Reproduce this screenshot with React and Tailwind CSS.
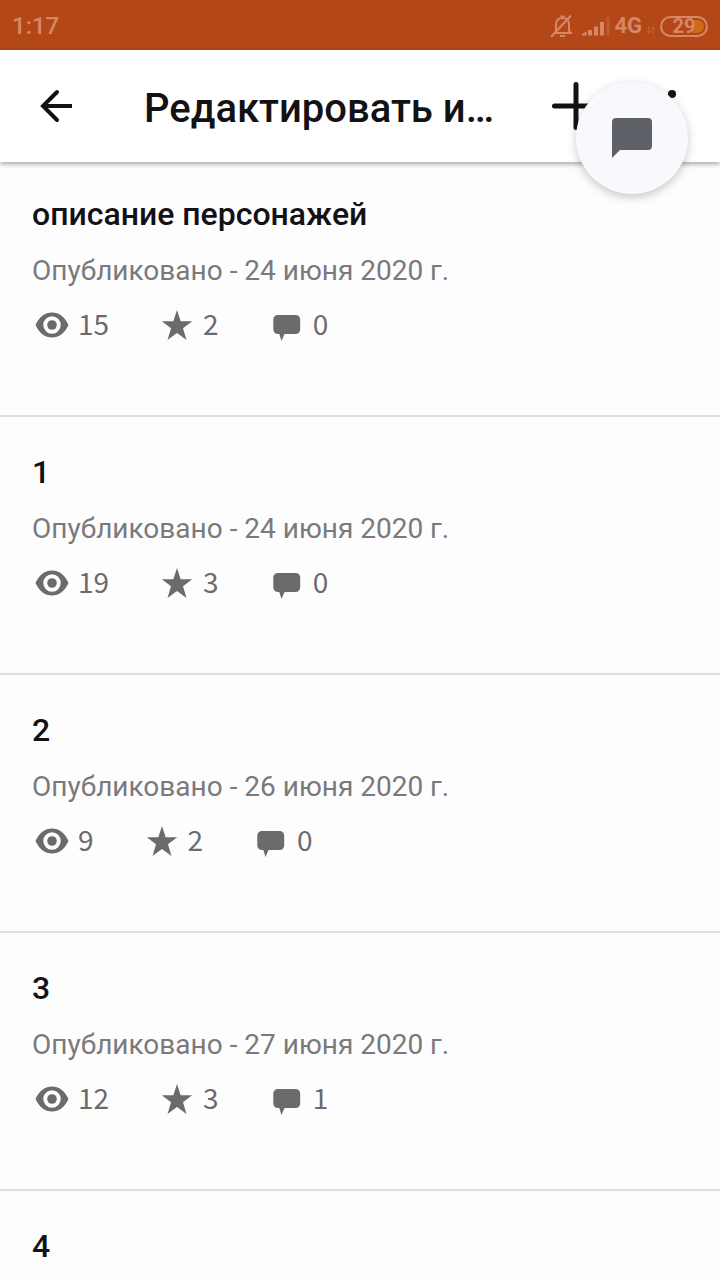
import React from 'react';

const parts = [
  { title: 'описание персонажей', date: '24 июня 2020 г.', reads: 15, votes: 2, comments: 0 },
  { title: '1', date: '24 июня 2020 г.', reads: 19, votes: 3, comments: 0 },
  { title: '2', date: '26 июня 2020 г.', reads: 9, votes: 2, comments: 0 },
  { title: '3', date: '27 июня 2020 г.', reads: 12, votes: 3, comments: 1 },
  { title: '4' },
];

function EyeIcon() {
  return (
    <svg viewBox="0 -2 40 40" className="h-10 w-10" aria-hidden="true">
      <path
        fill="currentColor"
        fillRule="evenodd"
        d="M3.500 20C7 12 13 7.500 20 7.500S33 12 36.500 20C33 28 27 32.500 20 32.500S7 28 3.500 20ZM20 11.300a8.700 8.700 0 1 0 0 17.400a8.700 8.700 0 1 0 0-17.400Z"
      />
      <circle cx="20" cy="20" r="4.800" fill="currentColor" />
    </svg>
  );
}

function StarIcon() {
  return (
    <svg viewBox="0 -2 40 40" className="h-10 w-10" aria-hidden="true">
      <path
        fill="currentColor"
        d="M20 5L23.700 16.300H35.200L26 23.300L29.500 35L20 28L10.500 35L14 23.300L4.800 16.300H16.300Z"
      />
    </svg>
  );
}

function CommentIcon() {
  return (
    <svg viewBox="0 -2 40 40" className="h-10 w-10" aria-hidden="true">
      <path
        fill="currentColor"
        d="M10.300 10H28.700a4.500 4.500 0 0 1 4.500 4.500V24.500a4.500 4.500 0 0 1-4.500 4.500H17.500L14.500 36L12.300 29H10.800a4.500 4.500 0 0 1-4.500-4.500V14.500a4.500 4.500 0 0 1 4.500-4.500Z"
      />
    </svg>
  );
}

function Stat({ icon, value }) {
  return (
    <span className="flex items-center gap-1.5">
      {icon}
      <span>{value}</span>
    </span>
  );
}

function StatusBar() {
  return (
    <div className="flex h-[50px] shrink-0 items-center justify-between bg-[#b44718] px-3 pt-0.5 text-[#d58766]">
      <span className="text-2xl font-medium leading-6">1:17</span>
      <div className="flex items-center gap-2">
        <svg viewBox="0 0 24 24" className="h-6 w-6" fill="none" stroke="currentColor" strokeWidth="2" aria-hidden="true">
          <path d="M4 19H22M6 18V10.500C6 6.500 8.500 4 12.500 4S19 6.500 19 10.500V17L21 19M10.500 2.500H14.500M10 22H15M1 23L21 1.500" />
        </svg>
        <div className="flex items-center gap-1">
          <svg viewBox="0 0 28 20" className="h-5 w-7" fill="currentColor" aria-hidden="true">
            <path d="M0 19.500V18L4.500 15.500V19.500ZM6 14H10V19.500H6ZM12 10.500H16V19.500H12ZM18 6H22V19.500H18Z" />
            <path d="M24.500 1H27.500V19.500H24.500Z" opacity="0.35" />
          </svg>
          <span className="text-[22px] font-bold leading-6">4G</span>
          <svg viewBox="0 0 10 10" className="mt-2 h-[10px] w-[10px]" fill="none" stroke="currentColor" opacity="0.5" aria-hidden="true">
            <path d="M3 1V8M1 6L3 8L5 6M7 9V2M5.500 4L7 2L9 4" />
          </svg>
        </div>
        <div className="relative -ml-1 flex h-[21px] w-12 items-center justify-center rounded-full border-2 border-current">
          <span className="absolute right-0.5 h-[13px] w-3 rounded-r-full bg-[#cf6a17]" />
          <span className="relative text-xl font-bold leading-5">29</span>
        </div>
      </div>
    </div>
  );
}

function Header() {
  return (
    <header className="relative z-10 flex h-28 shrink-0 items-center bg-white px-8 text-[#121214] shadow-[0_2px_5px_rgba(0,0,0,0.35)]">
      <button type="button" aria-label="Назад" className="h-12 w-12">
        <svg viewBox="0 0 48 48" fill="none" stroke="currentColor" strokeWidth="4" aria-hidden="true">
          <path d="M40 24H11" />
          <path d="M25 10L11 24L25 38" strokeLinecap="round" />
        </svg>
      </button>
      <h1 className="ml-16 flex-1 truncate pt-1.5 text-[40px] font-medium leading-[48px]">Редактировать и…</h1>
      <button type="button" aria-label="Добавить" className="mr-14 h-12 w-12">
        <svg viewBox="0 0 48 48" fill="none" stroke="currentColor" strokeWidth="5" strokeLinecap="round" aria-hidden="true">
          <path d="M24 2.500V45.500M2.500 24H45.500" />
        </svg>
      </button>
      <button type="button" aria-label="Ещё" className="h-12 w-8">
        <svg viewBox="0 0 32 48" fill="currentColor" aria-hidden="true">
          <circle cx="16" cy="12" r="4" />
          <circle cx="16" cy="24" r="4" />
          <circle cx="16" cy="36" r="4" />
        </svg>
      </button>
    </header>
  );
}

export default function App() {
  return (
    <div className="relative flex h-screen flex-col overflow-hidden bg-[#fefdfe] font-['Roboto',sans-serif]">
      <StatusBar />
      <Header />

      <ul className="flex-1 overflow-hidden">
        {parts.map((part) => (
          <li key={part.title} className="border-b-2 border-[#dedede] px-8 pb-[76px] pt-[35px] first:pt-8">
            <h2 className="truncate text-[32px] font-medium leading-10 text-[#121214]">{part.title}</h2>
            {part.date && (
              <>
                <p className="mt-[21px] text-[28px] leading-8 text-[#7a797b]">Опубликовано - {part.date}</p>
                <div className="mt-5 flex h-8 items-center gap-12 font-['Noto_Sans_CJK_SC',sans-serif] text-[28px] leading-8 text-[#6c6a6d]">
                  <Stat icon={<EyeIcon />} value={part.reads} />
                  <Stat icon={<StarIcon />} value={part.votes} />
                  <Stat icon={<CommentIcon />} value={part.comments} />
                </div>
              </>
            )}
          </li>
        ))}
      </ul>

      {/* Floating chat bubble */}
      <button
        type="button"
        aria-label="Чат"
        className="absolute right-8 top-[82px] z-20 flex h-28 w-28 items-center justify-center rounded-full bg-[#f9f9fd] text-[#5f6168] shadow-[0_3px_10px_rgba(0,0,0,0.22)]"
      >
        <svg viewBox="0 0 40 40" className="h-10 w-10" fill="currentColor" aria-hidden="true">
          <path d="M4 0H36a4 4 0 0 1 4 4V28a4 4 0 0 1-4 4H8L0 40V4a4 4 0 0 1 4-4Z" />
        </svg>
      </button>
    </div>
  );
}
